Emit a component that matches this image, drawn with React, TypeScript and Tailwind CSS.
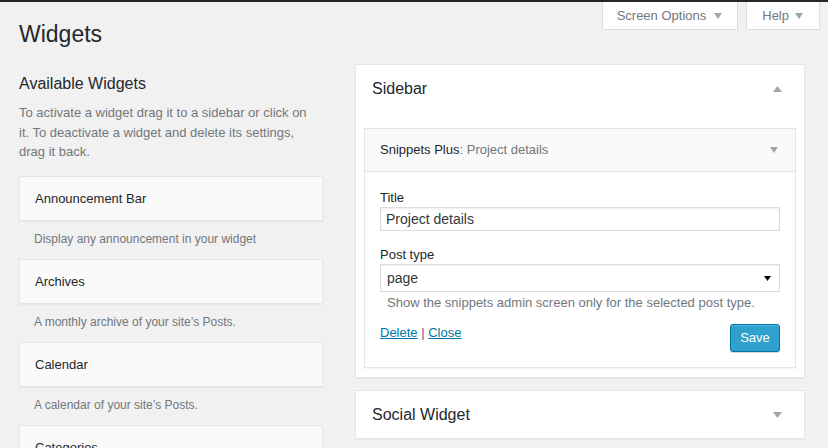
import React from "react";

function Tri({ up = false, w = 8, h = 5, color = "#a0a5aa" }: { up?: boolean; w?: number; h?: number; color?: string }) {
  return (
    <svg width={w} height={h} viewBox={`0 0 ${w} ${h}`} className="block shrink-0">
      {up ? (
        <polygon points={`0,${h} ${w},${h} ${w / 2},0`} fill={color} />
      ) : (
        <polygon points={`0,0 ${w},0 ${w / 2},${h}`} fill={color} />
      )}
    </svg>
  );
}

const widgets = [
  { name: "Announcement Bar", desc: "Display any announcement in your widget" },
  { name: "Archives", desc: "A monthly archive of your site\u2019s Posts." },
  { name: "Calendar", desc: "A calendar of your site\u2019s Posts." },
  { name: "Categories", desc: "A list or dropdown of categories." },
];

export default function App() {
  return (
    <div className="w-[828px] h-[448px] overflow-hidden bg-[#f1f1f1] font-['Liberation_Sans',Arial,sans-serif] text-[#23282d]">
      <div className="h-[2px] bg-[#23282d]" />
      <div className="flex items-start justify-between">
        <h1 className="ml-[19px] mt-[18px] text-[23px] leading-[29px] font-normal">Widgets</h1>
        <div className="flex gap-[8px] mr-[8px]">
          <div className="h-[28px] flex items-center gap-[8px] pl-[14px] pr-[15px] bg-white border border-t-0 border-[#ddd] text-[13px] text-[#72777c]">
            <span>Screen Options</span>
            <Tri w={8} h={6} />
          </div>
          <div className="h-[28px] flex items-center gap-[6px] pl-[15px] pr-[16px] bg-white border border-t-0 border-[#ddd] text-[13px] text-[#72777c]">
            <span>Help</span>
            <Tri w={8} h={6} />
          </div>
        </div>
      </div>

      <div className="flex gap-[32px] pl-[19px] pt-[15px]">
        {/* Left column */}
        <div className="w-[304px] shrink-0">
          <h2 className="mt-[10px] text-[16px] leading-[20px] font-normal">Available Widgets</h2>
          <p className="mt-[9px] pr-[8px] text-[13px] leading-[19.5px] text-[#72777c]">
            To activate a widget drag it to a sidebar or click on it. To deactivate a widget and delete its settings, drag it back.
          </p>
          <div className="mt-[14.5px]">
            {widgets.map((w) => (
              <div key={w.name}>
                <div className="border border-[#e5e5e5] bg-[#fafafa] shadow-[0_1px_1px_rgba(0,0,0,0.04)] p-[15px] text-[13px] leading-[13px]">
                  {w.name}
                </div>
                <div className="px-[15px] pt-[9px] pb-[10px] text-[12px] leading-[19px] text-[#72777c]">{w.desc}</div>
              </div>
            ))}
          </div>
        </div>

        {/* Right column */}
        <div className="w-[450px] shrink-0">
          <div className="border border-[#e5e5e5] bg-white shadow-[0_1px_1px_rgba(0,0,0,0.04)]">
            <div className="h-[47px] flex items-center justify-between pl-[16px] pr-[22px]">
              <span className="text-[16px]">Sidebar</span>
              <Tri up w={9} h={6} />
            </div>
            <div className="px-[8px] pt-[16px] pb-[9px]">
              <div className="border border-[#e5e5e5] bg-white shadow-[0_1px_1px_rgba(0,0,0,0.04)]">
                <div className="h-[43px] flex items-center justify-between pl-[15px] pr-[17px] bg-[#fafafa] border-b border-[#e5e5e5] text-[13px]">
                  <span>
                    Snippets Plus<span className="text-[#72777c]">: Project details</span>
                  </span>
                  <Tri w={8} h={6} />
                </div>
                <div className="px-[15px] pt-[16px] pb-[15px] text-[13px]">
                  <div className="leading-[19px] text-[#23282d]">Title</div>
                  <div className="h-[24px] flex items-center pl-[5px] border border-[#ddd] shadow-[inset_0_1px_2px_rgba(0,0,0,0.07)] bg-white text-[14px] text-[#32373c]">
                    Project details
                  </div>
                  <div className="mt-[14px] leading-[19px] text-[#23282d]">Post type</div>
                  <div className="h-[28px] flex items-center justify-between pl-[6px] pr-[8px] border border-[#ddd] shadow-[inset_0_1px_2px_rgba(0,0,0,0.07)] bg-white text-[14px] text-[#32373c]">
                    <span>page</span>
                    <Tri w={7} h={5} color="#000" />
                  </div>
                  <div className="mt-[1px] pl-[7px] leading-[19px] text-[#72777c]">
                    Show the snippets admin screen only for the selected post type.
                  </div>
                  <div className="mt-[11px] flex items-start justify-between">
                    <div className="leading-[19px]">
                      <span className="text-[#0074a2] underline">Delete</span>
                      <span className="text-[#7a4e96]"> | </span>
                      <span className="text-[#0074a2] underline">Close</span>
                    </div>
                    <div className="mt-[1px] h-[28px] w-[50px] flex items-center justify-center rounded-[3px] bg-[#2ea2cc] border border-[#0074a2] text-white text-[13px] shadow-[inset_0_1px_0_rgba(120,200,230,0.5),0_1px_0_rgba(0,0,0,0.15)]">
                      Save
                    </div>
                  </div>
                </div>
              </div>
            </div>
          </div>

          <div className="mt-[12px] border border-[#e5e5e5] bg-white shadow-[0_1px_1px_rgba(0,0,0,0.04)]">
            <div className="h-[47px] flex items-center justify-between pl-[16px] pr-[22px]">
              <span className="text-[16px]">Social Widget</span>
              <Tri w={9} h={6} />
            </div>
          </div>
        </div>
      </div>
    </div>
  );
}
